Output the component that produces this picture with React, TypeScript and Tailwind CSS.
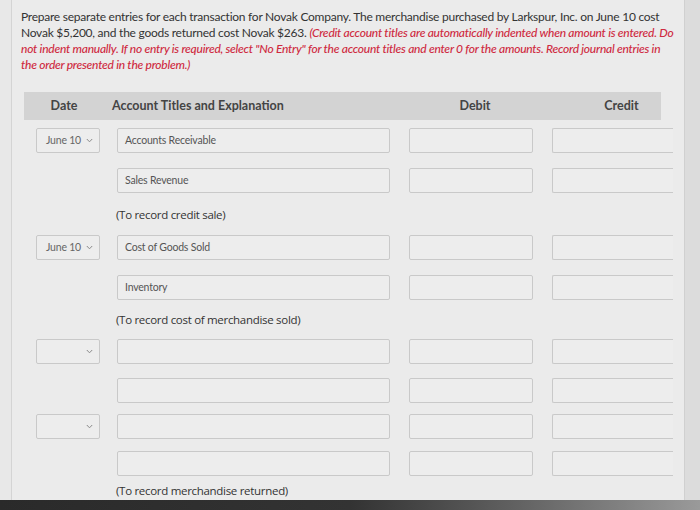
import React from "react";

function Chevron() {
  return (
    <svg width="7" height="5" viewBox="0 0 7 5" className="shrink-0">
      <path d="M0.8 1 L3.5 3.8 L6.2 1" fill="none" stroke="#8a8a8a" strokeWidth="1" />
    </svg>
  );
}

function DateSel({ value }: { value?: string }) {
  return (
    <div className="ml-[12px] w-[64px] h-[25px] border border-[#c9c9c9] rounded-[2px] bg-[#ededed] flex items-center justify-between pl-[9px] pr-[6px]">
      <span className="text-[10.5px] text-[#666] font-['Lato'] tracking-[-0.2px]">{value ?? ""}</span>
      <Chevron />
    </div>
  );
}

function Box({ w, text, open }: { w: string; text?: string; open?: boolean }) {
  return (
    <div
      className={`${w} h-[25px] border border-[#c9c9c9] ${open ? "border-r-0 rounded-l-[2px]" : "rounded-[2px]"} bg-[#ededed] flex items-center pl-[7px] shrink-0`}
    >
      {text ? <span className="text-[10.5px] text-[#555] font-['Lato'] tracking-[-0.2px]">{text}</span> : null}
    </div>
  );
}

function Row({ date, showDate, account, mt }: { date?: string; showDate?: boolean; account?: string; mt: string }) {
  return (
    <div className={`flex ${mt} h-[25px] shrink-0`}>
      <div className="w-[93px] shrink-0">{showDate ? <DateSel value={date} /> : null}</div>
      <Box w="w-[273px]" text={account} />
      <div className="w-[19px] shrink-0" />
      <Box w="w-[124px]" />
      <div className="w-[19px] shrink-0" />
      <Box w="w-[121px]" open />
    </div>
  );
}

function Expl({ text, h, align }: { text: string; h: string; align: string }) {
  return (
    <div className={`${h} flex ${align} pl-[92px] shrink-0`}>
      <span className="text-[11.5px] leading-[15px] text-[#333] font-['Open_Sans'] tracking-[-0.3px]">{text}</span>
    </div>
  );
}

export default function App() {
  return (
    <div className="w-[700px] h-[510px] overflow-hidden flex flex-col bg-[#e4e4e4]">
      <div className="flex flex-1 min-h-0">
        <div className="w-[12px] bg-[#e8e8e8] border-r border-[#d4d4d4]" />
        <div className="w-[672px] overflow-hidden bg-[#ebebeb] flex flex-col">
          <div className="pl-[9px] pt-[9px] font-['Lato'] text-[12px] leading-[16px] text-[#333] tracking-[-0.25px] whitespace-nowrap">
            <div>Prepare separate entries for each transaction for Novak Company. The merchandise purchased by Larkspur, Inc. on June 10 cost</div>
            <div>
              Novak $5,200, and the goods returned cost Novak $263.{" "}
              <span className="italic font-medium text-[#cf2a3f]">(Credit account titles are automatically indented when amount is entered. Do</span>
            </div>
            <div className="italic font-medium text-[#cf2a3f]">not indent manually. If no entry is required, select "No Entry" for the account titles and enter 0 for the amounts. Record journal entries in</div>
            <div className="italic font-medium text-[#cf2a3f]">the order presented in the problem.)</div>
          </div>

          <div className="ml-[12px] mt-[19px] w-[637px] h-[28px] bg-[#d3d3d3] flex items-center font-['Lato'] font-bold text-[12.5px] text-[#444] shrink-0">
            <div className="w-[80px] text-center">Date</div>
            <div className="w-[300px] pl-[8px]">Account Titles and Explanation</div>
            <div className="w-[142px] text-center">Debit</div>
            <div className="flex-1 text-center pl-[36px]">Credit</div>
          </div>

          <div className="ml-[12px] flex flex-col">
            <Row mt="mt-[8px]" showDate date="June 10" account="Accounts Receivable" />
            <Row mt="mt-[15px]" account="Sales Revenue" />
            <Expl text="(To record credit sale)" h="h-[42px]" align="items-center" />
            <Row mt="mt-0" showDate date="June 10" account="Cost of Goods Sold" />
            <Row mt="mt-[15px]" account="Inventory" />
            <Expl text="(To record cost of merchandise sold)" h="h-[39px]" align="items-center" />
            <Row mt="mt-0" showDate />
            <Row mt="mt-[14px]" />
            <Row mt="mt-[11px]" showDate />
            <Row mt="mt-[12px]" />
            <Expl text="(To record merchandise returned)" h="h-[22px]" align="items-end" />
          </div>
        </div>
        <div className="flex-1 bg-[#dcdcdc] border-l border-[#d0d0d0]" />
      </div>
      <div className="h-[10px] bg-gradient-to-r from-[#2a2a2a] via-[#333] to-[#9a9a9a] shrink-0" />
    </div>
  );
}
